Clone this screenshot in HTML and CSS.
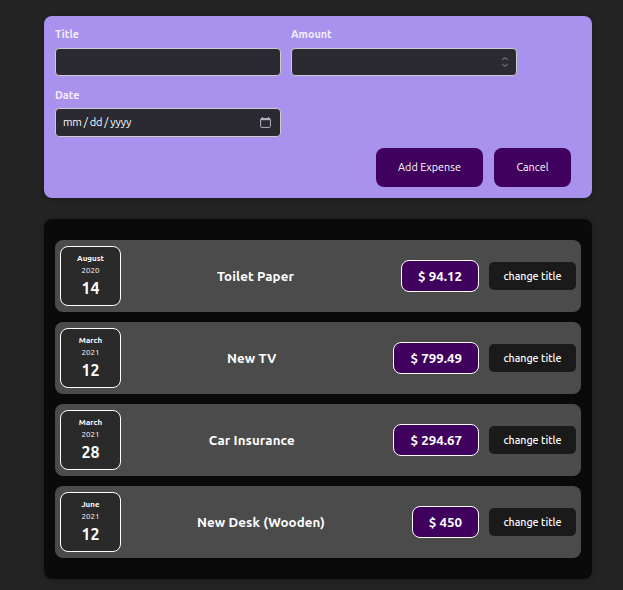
FILE: index.html
```html
<!DOCTYPE html>
<html lang="en">
<head>
<meta charset="utf-8">
<title>Expenses</title>
<link rel="stylesheet" href="styles.css">
</head>
<body>
<form class="new-expense">
  <div class="controls">
    <div class="control">
      <label for="title">Title</label>
      <input id="title" class="field" type="text">
    </div>
    <div class="control">
      <label for="amount">Amount</label>
      <div class="field" id="amount">
        <svg class="spinner" width="6" height="10" viewBox="0 0 6 10"><path d="M.8 3.2V2.500L2.300 1h1.400L5.200 2.500v.7M.8 6.800v.7L2.300 9h1.400l1.500-1.500v-.7"/></svg>
      </div>
    </div>
    <div class="control">
      <label for="date">Date</label>
      <div class="field date-field" id="date">
        <span class="placeholder">mm / dd / yyyy</span>
        <svg class="calendar" width="11" height="11" viewBox="0 0 11 11"><rect x=".6" y="1.500" width="9.800" height="8.900" rx="1"/><path d="M1 2.200h9" stroke-width="2"/><path d="M2.500 0v2M8.500 0v2"/></svg>
      </div>
    </div>
  </div>
  <div class="actions">
    <button class="action add" type="button">Add Expense</button>
    <button class="action cancel" type="button">Cancel</button>
  </div>
</form>
<ul class="expenses">
  <li class="expense">
    <div class="date"><div class="month">August</div><div class="year">2020</div><div class="day">14</div></div>
    <h2>Toilet Paper</h2>
    <div class="price">$ 94.12</div>
    <button class="change" type="button">change title</button>
  </li>
  <li class="expense">
    <div class="date"><div class="month">March</div><div class="year">2021</div><div class="day">12</div></div>
    <h2>New TV</h2>
    <div class="price">$ 799.49</div>
    <button class="change" type="button">change title</button>
  </li>
  <li class="expense">
    <div class="date"><div class="month">March</div><div class="year">2021</div><div class="day">28</div></div>
    <h2>Car Insurance</h2>
    <div class="price">$ 294.67</div>
    <button class="change" type="button">change title</button>
  </li>
  <li class="expense">
    <div class="date"><div class="month">June</div><div class="year">2021</div><div class="day">12</div></div>
    <h2>New Desk (Wooden)</h2>
    <div class="price">$ 450</div>
    <button class="change" type="button">change title</button>
  </li>
</ul>
</body>
</html>
```
FILE: styles.css
```css
* { box-sizing: border-box; }
body {
  margin: 0;
  padding: 16px 31px 11px 44px;
  background: #242424;
  color: #fff;
  font-family: Ubuntu, "Noto Sans", sans-serif;
  font-size: 11px;
}
button { font-family: inherit; border: 0; color: #fff; padding: 0; white-space: nowrap; }
.new-expense {
  height: 182px;
  padding: 10px 11px 11px;
  border-radius: 8px;
  background: #a892ee;
  box-shadow: 0 1px 6px rgba(0, 0, 0, .3);
}
.controls { display: grid; grid-template-columns: 226px 226px; column-gap: 10px; row-gap: 11px; }
label {
  display: block;
  height: 16px;
  margin-bottom: 6px;
  line-height: 16px;
  font-size: 10.800px;
  font-weight: 700;
  color: rgba(255, 255, 255, .87);
}
.field {
  display: flex;
  align-items: center;
  justify-content: flex-end;
  width: 226px;
  height: 28px;
  padding: 0 8px;
  border: 1px solid #ccc;
  border-radius: 4px;
  background: #2b2a33;
  color: #fff;
}
.date-field { height: 29px; justify-content: space-between; padding: 0 9px 0 7px; margin-top: -1px; }
.placeholder { letter-spacing: -.27px; padding-bottom: 1px; }
.spinner, .calendar { fill: none; stroke: #96959c; }
.calendar { stroke: #b4b4b8; }
.actions { display: flex; justify-content: flex-end; gap: 11px; padding-right: 10px; margin-top: 11px; }
.action { height: 39px; padding-bottom: 1px; border-radius: 8px; background: #40005d; font-size: 10.800px; }
.add { width: 107px; }
.cancel { width: 77px; }
.expenses {
  list-style: none;
  display: flex;
  flex-direction: column;
  gap: 10px;
  margin: 21px 0 0;
  padding: 21px 11px;
  height: 360px;
  border-radius: 8px;
  background: #0a0a0a;
  box-shadow: 0 1px 6px rgba(0, 0, 0, .3);
}
.expense {
  display: flex;
  align-items: center;
  height: 72px;
  padding: 0 5px;
  border-radius: 8px;
  background: #4b4b4b;
}
.date {
  width: 61px;
  height: 60px;
  padding-top: 6px;
  border: 1px solid #fff;
  border-radius: 8px;
  background: #2a2a2a;
  text-align: center;
}
.month { font-size: 8px; font-weight: 700; line-height: 12px; }
.year { font-size: 8px; line-height: 12px; }
.day { font-size: 16px; font-weight: 700; line-height: 23px; }
h2 { flex: 1; margin: 0; text-align: center; font-size: 13.330px; font-weight: 700; letter-spacing: .09px; }
.price {
  height: 32px;
  margin: 0 10px 0 11px;
  padding: 0 16px;
  border: 1px solid #fff;
  border-radius: 8px;
  background: #40005d;
  font-size: 13.330px;
  font-weight: 700;
  line-height: 31px;
}
.change { width: 87px; height: 28px; border-radius: 5px; background: #1a1a1a; font-size: 10.670px; font-weight: 500; }
```
